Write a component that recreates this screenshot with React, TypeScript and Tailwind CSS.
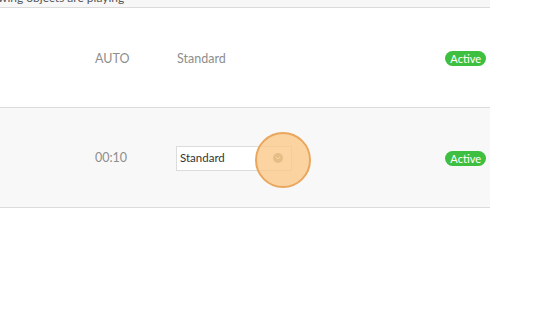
import { ChevronDown } from 'lucide-react';

function Badge() {
  return (
    <span className="rounded-full bg-[#3fbf3f] px-[5px] py-[1px] text-[11px] leading-[13px] text-white">
      Active
    </span>
  );
}

export default function App() {
  return (
    <div className="h-[315px] w-[560px] overflow-hidden bg-white font-['Lato','Noto_Sans',sans-serif]">
      <div className="w-[490px]">
        <div className="h-[8px] overflow-hidden border-b border-[#dcdcdc] bg-[#f7f7f7]">
          <p className="-mt-[9px] -ml-[2px] text-[12px] leading-[14px] text-[#555]">wing objects are playing</p>
        </div>
        <div className="flex h-[100px] items-center border-b border-[#dcdcdc] bg-white pt-[2px] pr-[4px] text-[12.5px] text-[#8e8e8e]">
          <span className="ml-[95px] w-[82px] pt-[1px]">AUTO</span>
          <span className="flex-1 pt-[1px]">Standard</span>
          <Badge />
        </div>
        <div className="flex h-[100px] items-center border-b border-[#dcdcdc] bg-[#f8f8f8] pt-[1px] pr-[4px] text-[12.5px] text-[#8e8e8e]">
          <span className="ml-[95px] w-[81px] pt-[1px]">00:10</span>
          <div className="relative flex h-[25px] w-[116px] items-center justify-between border border-[#dcdcdc] bg-white pl-[3px] pr-[8px] text-[11.5px] text-[#333]">
            <span>Standard</span>
            <span className="flex h-[10px] w-[10px] items-center justify-center rounded-full bg-[#8a8a7a]">
              <ChevronDown size={8} strokeWidth={3} className="text-white" />
            </span>
            <div className="absolute left-[78px] top-[-15px] h-[56px] w-[56px] rounded-full border-2 border-[#e9a75e] bg-[#fbc98a]/80" />
          </div>
          <span className="flex-1" />
          <Badge />
        </div>
      </div>
    </div>
  );
}
